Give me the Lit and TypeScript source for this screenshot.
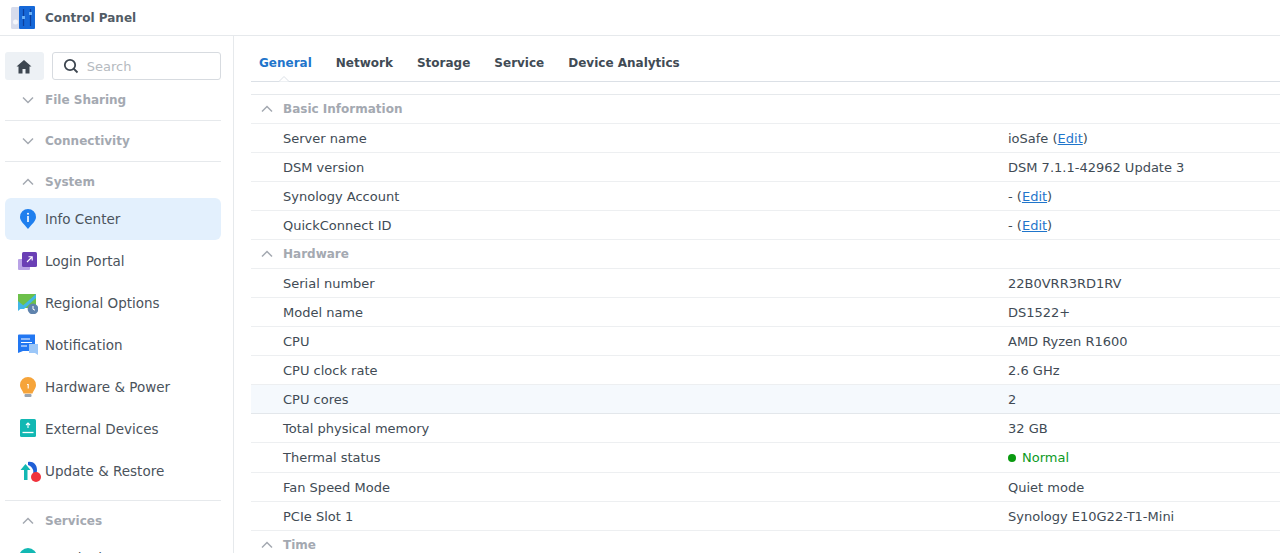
import { LitElement, html, css, svg } from "lit";
import { customElement } from "lit/decorators.js";

const chev = (up: boolean) => html`<svg class="chev" width="12" height="8" viewBox="0 0 12 8"><path d="${up ? "M1 6.5 L6 1.5 L11 6.5" : "M1 1.5 L6 6.5 L11 1.5"}" fill="none" stroke="#a4a9b1" stroke-width="1.5"/></svg>`;

const icons: Record<string, unknown> = {
  info: svg`<path d="M10 1a8 8 0 0 1 8 8c0 4-4 7-8 12C6 16 2 13 2 9a8 8 0 0 1 8-8z" fill="#1f7fee"/><rect x="9.2" y="8" width="1.6" height="6" fill="#fff"/><circle cx="10" cy="5.8" r="1" fill="#fff"/>`,
  login: svg`<rect x="0" y="9" width="12" height="11" rx="1" fill="#b9a3e6"/><rect x="4" y="2" width="15" height="15" rx="1.5" fill="#6a3fb5"/><path d="M9 12l5-5M10.5 6.8H14.2V10.5" stroke="#fff" stroke-width="1.1" fill="none"/>`,
  region: svg`<path d="M0 2H18V16H0z" fill="#6cc04a"/><path d="M0 18L18 2V6L6 17H0z" fill="#41b6e6"/><path d="M0 9L6 14L0 19z" fill="#41b6e6"/><circle cx="15" cy="17" r="5.4" fill="#5f83ad"/><path d="M15 14v3.2l2 1" stroke="#fff" stroke-width="1" fill="none"/>`,
  notif: svg`<path d="M0 1.5A1 1 0 0 1 1 .5H17V17H5L0 19z" fill="#2277f2"/><path d="M3 5H12M3 8.5H14M3 12H9" stroke="#fff" stroke-width="1.2"/><path d="M11 10H20V21L17 19H11z" fill="#9cc7f8"/>`,
  bulb: svg`<path d="M10 1a8 8 0 0 1 8 8c0 3.5-2.5 5-3.5 8.5h-9C4.500 14 2 12.500 2 9a8 8 0 0 1 8-8z" fill="#f6a43a"/><rect x="6.500" y="18" width="7" height="3" rx="1" fill="#9aa4b0"/><path d="M9 8.500h1.200v4" stroke="#fff" stroke-width="1.100" fill="none"/>`,
  ext: svg`<rect x="2" y="1" width="16" height="18" rx="1.500" fill="#12b8b3"/><path d="M10 10V5M8 7l2-2 2 2" stroke="#fff" stroke-width="1.100" fill="none"/><path d="M4.500 14.500H15.500" stroke="#fff" stroke-width="1.300"/>`,
  update: svg`<path d="M6 20V10H2.500L7.500 4l5 6H9.500V20z" fill="#12b8b3"/><path d="M10 2C15 1 19 4.500 19 10c0 3-1 5-3.500 8L15 14C16 11 15 7 10 5z" fill="#1f5fd6"/>`,
  term: svg`<circle cx="10" cy="10" r="9" fill="#12b8b3"/>`,
};

interface Row { k: string; v: unknown; hover?: boolean; }
const edit = (pre: string) => html`${pre} (<a class="link">Edit</a>)`;

const basic: Row[] = [
  { k: "Server name", v: edit("ioSafe") },
  { k: "DSM version", v: "DSM 7.1.1-42962 Update 3" },
  { k: "Synology Account", v: edit("-") },
  { k: "QuickConnect ID", v: edit("-") },
];
const hardware: Row[] = [
  { k: "Serial number", v: "22B0VRR3RD1RV" },
  { k: "Model name", v: "DS1522+" },
  { k: "CPU", v: "AMD Ryzen R1600" },
  { k: "CPU clock rate", v: "2.6 GHz" },
  { k: "CPU cores", v: "2", hover: true },
  { k: "Total physical memory", v: "32 GB" },
  { k: "Thermal status", v: html`<span class="ok"><i class="dot"></i>Normal</span>` },
  { k: "Fan Speed Mode", v: "Quiet mode" },
  { k: "PCIe Slot 1", v: "Synology E10G22-T1-Mini" },
];
const items: [string, string][] = [
  ["info", "Info Center"],
  ["login", "Login Portal"],
  ["region", "Regional Options"],
  ["notif", "Notification"],
  ["bulb", "Hardware & Power"],
  ["ext", "External Devices"],
  ["update", "Update & Restore"],
];

@customElement("app-root")
export class AppRoot extends LitElement {
  static styles = css`
    :host { display: block; width: 1280px; height: 553px; overflow: hidden; background: #fff;
      font-family: "DejaVu Sans", Verdana, sans-serif; font-size: 13px; color: #414b55; }
    .header { height: 35px; border-bottom: 1px solid #e6e9ec; display: flex; align-items: center; gap: 10px; padding-left: 11px; }
    .title { font-weight: 700; font-size: 12px; color: #525c66; }
    .main { display: flex; height: 517px; }
    .side { width: 233px; flex: none; border-right: 1px solid #e6e9ec; padding: 16px 12px 0 5px; box-sizing: content-box; width: 216px; overflow: hidden; }
    .tools { display: flex; gap: 8px; height: 28px; }
    .home { width: 40px; height: 28px; border-radius: 3px; background: #edf1f5; display: flex; align-items: center; justify-content: center; }
    .search { width: 162px; height: 26px; border: 1px solid #d7dbe0; border-radius: 3px; display: flex; align-items: center; gap: 8px; padding-left: 10px; color: #b5bac0; }
    .sec { border-bottom: 1px solid #e6e9ec; padding-bottom: 4px; }
    .sec.open { padding-bottom: 8px; }
    .sec.last { border: 0; }
    .sech { height: 32px; margin-top: 4px; display: flex; align-items: center; font-weight: 700; font-size: 12px; color: #a4a9b1; }
    .chev { flex: none; margin-left: 17px; margin-right: 11px; }
    .item { height: 42px; display: flex; align-items: center; border-radius: 6px; font-size: 13.500px; color: #4b535c; }
    .item.active { background: #e3f0fd; }
    .item svg { margin-left: 13px; margin-right: 7px; flex: none; }
    .item.noti { position: relative; }
    .badge { position: absolute; left: 26px; top: 22px; width: 10px; height: 10px; border-radius: 50%; background: #f0323c; }
    .content { flex: 1; padding: 9px 0 0 17px; min-width: 0; }
    .tabs { height: 36px; display: flex; border-bottom: 1px solid #dbe0e6; position: relative; font-weight: 700; font-size: 12px; color: #414b55; gap: 24px; padding-left: 8px; align-items: center; }
    .tab.on { color: #1f75cb; }
    .notch { position: absolute; left: 28px; bottom: -1px; width: 10px; height: 10px; }
    .table { margin-top: 12px; border-top: 1px solid #e6e9ec; }
    .row { height: 28px; border-bottom: 1px solid #edeff1; display: flex; align-items: center; }
    .row.h { background: #f5f9fd; border-bottom-color: #e3e7eb; }
    .row.tall { height: 29px; }
    .k { width: 725px; padding-left: 32px; flex: none; }
    .v { flex: 1; }
    .group { font-weight: 700; font-size: 12px; color: #a4a9b1; }
    .group .chev { margin-left: 10px; margin-right: 10px; }
    .row.group { justify-content: flex-start; }
    .link { color: #1f75cb; text-decoration: underline; }
    .ok { color: #0d9a1f; display: inline-flex; align-items: center; }
    .dot { width: 8px; height: 8px; border-radius: 50%; background: #0a9a10; margin-right: 6px; }
  `;

  row(r: Row, tall = false) {
    return html`<div class="row ${r.hover ? "h" : ""} ${tall ? "tall" : ""}"><div class="k">${r.k}</div><div class="v">${r.v}</div></div>`;
  }
  group(t: string) {
    return html`<div class="row group">${chev(true)}${t}</div>`;
  }

  render() {
    return html`
      <div class="header">
        <svg width="24" height="24" viewBox="0 0 24 24">
          <rect x="0" y="1" width="9" height="22" rx="1.500" fill="#d7dcec"/>
          <circle cx="4.500" cy="16" r="2.500" fill="#f4f6fb"/>
          <rect x="8" y="0" width="16" height="23" rx="1" fill="#1668d8"/>
          <path d="M12.500 3V20M19.500 3V20" stroke="#0d3f9c" stroke-width="1.200"/>
          <rect x="11" y="10" width="3" height="3" fill="#6ab0f5"/>
          <rect x="18" y="6" width="3" height="3" fill="#6ab0f5"/>
        </svg>
        <div class="title">Control Panel</div>
      </div>
      <div class="main">
        <aside class="side">
          <div class="tools">
            <div class="home"><svg width="16" height="15" viewBox="0 0 16 15"><path d="M8 1L0.500 7.500H2.500V14.500H6.500V10H9.500V14.500H13.500V7.500H15.500z" fill="#3d4650"/></svg></div>
            <div class="search">
              <svg width="16" height="16" viewBox="0 0 16 16"><circle cx="7" cy="7" r="5.200" fill="none" stroke="#3d4650" stroke-width="1.800"/><path d="M10.500 10.500L14.500 14.500" stroke="#3d4650" stroke-width="1.800"/></svg>
              Search
            </div>
          </div>
          <div class="sec"><div class="sech">${chev(false)}File Sharing</div></div>
          <div class="sec"><div class="sech">${chev(false)}Connectivity</div></div>
          <div class="sec open">
            <div class="sech">${chev(true)}System</div>
            ${items.map(([ic, t], i) => html`<div class="item ${i === 0 ? "active" : ""} ${ic === "update" ? "noti" : ""}">
              <svg width="20" height="22" viewBox="0 0 20 22">${icons[ic]}</svg>${t}${ic === "update" ? html`<span class="badge"></span>` : ""}
            </div>`)}
          </div>
          <div class="sec last">
            <div class="sech">${chev(true)}Services</div>
            <div class="item"><svg width="20" height="22" viewBox="0 0 20 22">${icons.term}</svg>Terminal &amp; SNMP</div>
          </div>
        </aside>
        <section class="content">
          <div class="tabs">
            <span class="tab on">General</span><span class="tab">Network</span><span class="tab">Storage</span><span class="tab">Service</span><span class="tab">Device Analytics</span>
            <svg class="notch" viewBox="0 0 10 10"><path d="M0 9.500L5 4.500L10 9.500" fill="#fff" stroke="#dbe0e6"/></svg>
          </div>
          <div class="table">
            ${this.group("Basic Information")}
            ${basic.map((r) => this.row(r))}
            ${this.group("Hardware")}
            ${hardware.map((r) => this.row(r, r.k === "Thermal status"))}
            ${this.group("Time")}
          </div>
        </section>
      </div>
    `;
  }
}
